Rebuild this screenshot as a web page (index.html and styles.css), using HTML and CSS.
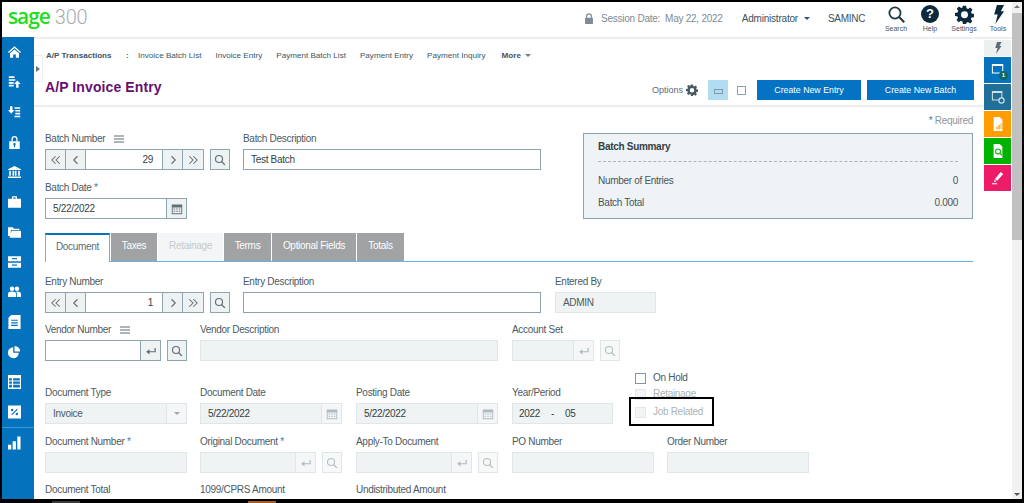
FILE: index.html
```html
<!DOCTYPE html>
<html lang="en">
<head>
<meta charset="utf-8">
<title>A/P Invoice Entry</title>
<link rel="stylesheet" href="styles.css">
</head>
<body>
<svg class="defs" width="0" height="0" aria-hidden="true">
  <symbol id="i-search" viewBox="0 0 16 16"><circle cx="6.7" cy="6.7" r="4.7" fill="none" stroke="currentColor" stroke-width="1.5"/><path d="M10.2 10.2 14.5 14.5" stroke="currentColor" stroke-width="1.8" fill="none"/></symbol>
  <symbol id="i-first" viewBox="0 0 16 16"><path d="M7.5 3 2.5 8l5 5M13 3 8 8l5 5" fill="none" stroke="currentColor" stroke-width="1.4"/></symbol>
  <symbol id="i-prev" viewBox="0 0 16 16"><path d="M10 3 5 8l5 5" fill="none" stroke="currentColor" stroke-width="1.5"/></symbol>
  <symbol id="i-next" viewBox="0 0 16 16"><path d="M6 3l5 5-5 5" fill="none" stroke="currentColor" stroke-width="1.5"/></symbol>
  <symbol id="i-last" viewBox="0 0 16 16"><path d="M3 3l5 5-5 5M8.5 3l5 5-5 5" fill="none" stroke="currentColor" stroke-width="1.4"/></symbol>
  <symbol id="i-enter" viewBox="0 0 16 16"><path d="M13.5 4v5H4" fill="none" stroke="currentColor" stroke-width="1.6"/><path d="M6 5.500v7L1.500 9z" fill="currentColor"/></symbol>
  <symbol id="i-cal" viewBox="0 0 16 16"><path fill="currentColor" d="M1 2h14v13H1zm1.200 4v7.800h11.600V6z"/><path fill="currentColor" d="M3.500 7.200h2v1.600h-2zm3.500 0h2v1.600H7zm3.500 0h2v1.600h-2zm-7 3h2v1.600h-2zm3.500 0h2v1.600H7zm3.500 0h2v1.600h-2z"/></symbol>
  <symbol id="i-gear" viewBox="0 0 24 24"><path fill="currentColor" fill-rule="evenodd" d="M10 1h4l.6 3.200 2 .8L19.300 3.200l2.800 2.800-1.800 2.700.8 2 3 .6v4l-3.200.6-.8 2 1.800 2.700-2.800 2.800-2.700-1.800-2 .8L14 24h-4l-.6-3.200-2-.8-2.700 1.800-2.800-2.800 1.800-2.700-.8-2L0 14v-4l3.200-.6.800-2L2.200 4.700 5 1.900l2.700 1.800 1.700-.7zM12 8a4.400 4.400 0 1 0 0 8.800A4.400 4.400 0 0 0 12 8z"/></symbol>
  <symbol id="i-bolt" viewBox="0 0 16 24"><path fill="currentColor" d="M6 0h9l-4 8h4L4 24l3-12H2.500z"/></symbol>
  <symbol id="i-menu" viewBox="0 0 10 8"><path d="M0 1h10M0 4h10M0 7h10" stroke="currentColor" stroke-width="1" fill="none"/></symbol>
</svg>

<div class="frame">
  <div class="app">
    <header class="topbar">
      <div class="logo"><span class="logo-sage">sage</span><span class="logo-num">300</span></div>
      <div class="session">
        <svg class="lock" viewBox="0 0 12 14"><path fill="#7d8c94" d="M1 6h10v8H1z"/><path fill="none" stroke="#7d8c94" stroke-width="1.6" d="M3 6V4a3 3 0 0 1 6 0v2"/></svg>
        <span class="session-label">Session Date:</span>
        <span class="session-date">May 22, 2022</span>
      </div>
      <div class="user">Administrator<span class="caret-dark"></span></div>
      <div class="company">SAMINC</div>
      <nav class="tools">
        <div class="tool"><svg class="tool-icon tool-search"><use href="#i-search"/></svg><span>Search</span></div>
        <div class="tool"><span class="help-icon">?</span><span>Help</span></div>
        <div class="tool"><svg class="tool-icon"><use href="#i-gear"/></svg><span>Settings</span></div>
        <div class="tool"><svg class="tool-icon"><use href="#i-bolt"/></svg><span>Tools</span></div>
      </nav>
    </header>

    <div class="body">
      <aside class="sidebar">
        <div class="side-item"><svg viewBox="0 0 16 14"><path d="M8 0 0 7l1 1.200L8 2.200l7 6L16 7zM2.500 8.500 8 3.800l5.500 4.700V14H9.700v-4H6.300v4H2.500z"/></svg></div>
        <div class="side-item"><svg viewBox="0 0 16 16"><path d="M1 1h7v2H1zM1 4.500h8v2H1zM1 8h6v2H1zM1 11.500h6v2H1zM11.500 6l4 4.500h-2.500V15h-3v-4.500H7.500z"/></svg></div>
        <div class="side-item"><svg viewBox="0 0 16 16"><path d="M8 2h7v2H8zM9 5.500h6v2H9zM9 9h6v2H9zM8 12.500h7v2H8zM4 10 0 5.500h2.500V1h3v4.500H8z"/></svg></div>
        <div class="side-item"><svg viewBox="0 0 14 16"><path fill-rule="evenodd" d="M1 7h12v9H1zm6 2a1.500 1.500 0 0 0-.7 2.800V14h1.400v-2.200A1.500 1.500 0 0 0 7 9z"/><path d="M3.500 7V4.500a3.500 3.500 0 0 1 7 0V7H9V4.500a2 2 0 0 0-4 0V7z"/></svg></div>
        <div class="side-item"><svg viewBox="0 0 16 15"><path d="M8 0l8 4v1H0V4zM1.500 6h2v6h-2zM5.500 6h2v6h-2zM8.500 6h2v6h-2zM12.500 6h2v6h-2zM0 13h16v2H0z"/></svg></div>
        <div class="side-item"><svg viewBox="0 0 16 14"><path fill-rule="evenodd" d="M0 3h16v11H0zM5 0h6v3H9.500V1.500h-3V3H5z"/></svg></div>
        <div class="side-item"><svg viewBox="0 0 16 14"><path d="M0 1h6l1.500 2H14v1.500H3.500V12H0z"/><path d="M4.500 5.500H16V14H2z"/></svg></div>
        <div class="side-item"><svg viewBox="0 0 16 14"><path fill-rule="evenodd" d="M0 0h16v6H0zM5 2v1.500h6V2zM0 8h16v6H0zM5 10v1.500h6V10z"/></svg></div>
        <div class="side-item"><svg viewBox="0 0 16 14"><circle cx="5" cy="3" r="2.800"/><circle cx="11" cy="3" r="2.800"/><path d="M0 13v-3.500C0 7.500 2 6.500 5 6.500s5 1 5 3V13zM11 13V9c0-1-.4-1.800-1-2.400.4-.1.700-.1 1-.1 3 0 5 1 5 3V13z"/></svg></div>
        <div class="side-item"><svg viewBox="0 0 13 15"><path fill-rule="evenodd" d="M3 0h10v15H0V3zM3 5v1.200h7V5zM3 7.800V9h7V7.800zM3 10.500v1.200h7v-1.200z"/></svg></div>
        <div class="side-item"><svg viewBox="0 0 15 14"><path d="M6 1.500V8h6.500A6.300 6.300 0 1 1 6 1.500z"/><path d="M7.500 0A6.500 6.500 0 0 1 14 6.500H7.500z"/></svg></div>
        <div class="side-item"><svg viewBox="0 0 14 15"><path fill-rule="evenodd" d="M0 0h14v15H0zm1.200 3.500v2.500h3V3.500zm4.300 0v2.500h7.300V3.500zM1.200 7v2.500h3V7zm4.300 0v2.500h7.300V7zm-4.300 3.500v3h3v-3zm4.300 0v3h7.300v-3z"/></svg></div>
        <div class="side-item"><svg viewBox="0 0 14 14"><path fill-rule="evenodd" d="M0 0h14v14H0zm9.700 3.500L3.500 9.700l.8.800 6.200-6.200zM4.500 3.500a1.300 1.300 0 1 0 0 2.600 1.300 1.300 0 0 0 0-2.600zm5 4.400a1.300 1.300 0 1 0 0 2.600 1.300 1.300 0 0 0 0-2.600z"/></svg></div>
        <div class="side-item side-last"><svg viewBox="0 0 14 14"><path d="M0 9h3.500v5H0zM5 5h3.500v9H5zM10 0h3.500v14H10z"/></svg></div>
      </aside>
      <div class="handle"><span class="handle-arrow"></span></div>

      <main class="content">
        <nav class="crumbs">
          <span class="crumb-title">A/P Transactions</span>
          <span class="crumb-sep">:</span>
          <a>Invoice Batch List</a><a>Invoice Entry</a><a>Payment Batch List</a><a>Payment Entry</a><a>Payment Inquiry</a>
          <span class="crumb-more">More<span class="caret-grey"></span></span>
        </nav>
        <div class="titlebar">
          <h1>A/P Invoice Entry</h1>
          <div class="actions">
            <span class="options">Options</span>
            <svg class="options-gear"><use href="#i-gear"/></svg>
            <span class="view-on"><span class="view-on-mark"></span></span>
            <span class="view-off"></span>
            <button class="primary btn-entry">Create New Entry</button>
            <button class="primary btn-batch">Create New Batch</button>
          </div>
        </div>

        <div class="form">
          <div class="required"><b>*</b> Required</div>
          <section class="top">
            <div class="top-left">
              <div class="row">
                <div class="field w-185">
                  <label>Batch Number<svg class="menu"><use href="#i-menu"/></svg></label>
                  <div class="ctl">
                    <div class="pager">
                      <span class="pbtn"><svg><use href="#i-first"/></svg></span><span class="pbtn"><svg><use href="#i-prev"/></svg></span>
                      <span class="pval">29</span>
                      <span class="pbtn"><svg><use href="#i-next"/></svg></span><span class="pbtn"><svg><use href="#i-last"/></svg></span>
                    </div>
                    <span class="sbtn"><svg><use href="#i-search"/></svg></span>
                  </div>
                </div>
                <div class="field w-298 ml-13">
                  <label>Batch Description</label>
                  <div class="input">Test Batch</div>
                </div>
              </div>
              <div class="row mt-12">
                <div class="field w-142">
                  <label>Batch Date <b class="req">*</b></label>
                  <div class="ctl ctl-tight"><div class="input grow">5/22/2022</div><span class="addon"><svg><use href="#i-cal"/></svg></span></div>
                </div>
              </div>
            </div>
            <aside class="summary">
              <h2>Batch Summary</h2>
              <div class="sum-row"><span>Number of Entries</span><span>0</span></div>
              <div class="sum-row"><span>Batch Total</span><span>0.000</span></div>
            </aside>
          </section>

          <div class="tabs">
            <span class="tab active">Document</span>
            <span class="tab t-taxes">Taxes</span>
            <span class="tab off t-ret">Retainage</span>
            <span class="tab t-terms">Terms</span>
            <span class="tab t-opt">Optional Fields</span>
            <span class="tab t-tot">Totals</span>
          </div>

          <div class="row mt-14">
            <div class="field w-185">
              <label>Entry Number</label>
              <div class="ctl">
                <div class="pager">
                  <span class="pbtn"><svg><use href="#i-first"/></svg></span><span class="pbtn"><svg><use href="#i-prev"/></svg></span>
                  <span class="pval">1</span>
                  <span class="pbtn"><svg><use href="#i-next"/></svg></span><span class="pbtn"><svg><use href="#i-last"/></svg></span>
                </div>
                <span class="sbtn"><svg><use href="#i-search"/></svg></span>
              </div>
            </div>
            <div class="field w-298 ml-13">
              <label>Entry Description</label>
              <div class="input"></div>
            </div>
            <div class="field w-101 ml-14">
              <label>Entered By</label>
              <div class="input dis strong">ADMIN</div>
            </div>
          </div>

          <div class="row mt-11">
            <div class="field w-142">
              <label>Vendor Number<svg class="menu"><use href="#i-menu"/></svg></label>
              <div class="ctl">
                <div class="ctl-tight grow"><div class="input grow"></div><span class="addon"><svg><use href="#i-enter"/></svg></span></div>
                <span class="sbtn"><svg><use href="#i-search"/></svg></span>
              </div>
            </div>
            <div class="field w-298 ml-13">
              <label>Vendor Description</label>
              <div class="input dis"></div>
            </div>
            <div class="field w-108 ml-14">
              <label>Account Set</label>
              <div class="ctl">
                <div class="ctl-tight grow"><div class="input dis grow"></div><span class="addon dis"><svg><use href="#i-enter"/></svg></span></div>
                <span class="sbtn dis"><svg><use href="#i-search"/></svg></span>
              </div>
            </div>
          </div>

          <div class="row row-end mt-10">
            <div class="field w-142">
              <label>Document Type</label>
              <div class="ctl-tight"><div class="input dis grow strong">Invoice</div><span class="addon dis"><span class="caret-select"></span></span></div>
            </div>
            <div class="field w-142 ml-13">
              <label>Document Date</label>
              <div class="ctl-tight"><div class="input dis grow">5/22/2022</div><span class="addon dis"><svg><use href="#i-cal"/></svg></span></div>
            </div>
            <div class="field w-142 ml-14">
              <label>Posting Date</label>
              <div class="ctl-tight"><div class="input dis grow">5/22/2022</div><span class="addon dis"><svg><use href="#i-cal"/></svg></span></div>
            </div>
            <div class="field w-101 ml-14">
              <label>Year/Period</label>
              <div class="input dis period"><span>2022</span><span>-</span><span>05</span></div>
            </div>
            <div class="checks">
              <div class="check"><span class="box"></span>On Hold</div>
              <div class="check off"><span class="box"></span>Retainage</div>
              <div class="check off"><span class="box"></span>Job Related</div>
              <div class="callout"></div>
            </div>
          </div>

          <div class="row mt-12">
            <div class="field w-142">
              <label>Document Number <b class="req">*</b></label>
              <div class="input dis"></div>
            </div>
            <div class="field w-142 ml-13">
              <label>Original Document <b class="req">*</b></label>
              <div class="ctl">
                <div class="ctl-tight grow"><div class="input dis grow"></div><span class="addon dis"><svg><use href="#i-enter"/></svg></span></div>
                <span class="sbtn dis"><svg><use href="#i-search"/></svg></span>
              </div>
            </div>
            <div class="field w-142 ml-14">
              <label>Apply-To Document</label>
              <div class="ctl">
                <div class="ctl-tight grow"><div class="input dis grow"></div><span class="addon dis"><svg><use href="#i-enter"/></svg></span></div>
                <span class="sbtn dis"><svg><use href="#i-search"/></svg></span>
              </div>
            </div>
            <div class="field w-142 ml-14">
              <label>PO Number</label>
              <div class="input dis"></div>
            </div>
            <div class="field w-142 ml-13">
              <label>Order Number</label>
              <div class="input dis"></div>
            </div>
          </div>

          <div class="row mt-11">
            <label class="lbl w-142">Document Total</label>
            <label class="lbl w-142 ml-13">1099/CPRS Amount</label>
            <label class="lbl w-142 ml-14">Undistributed Amount</label>
          </div>
        </div>
      </main>

      <aside class="dock">
        <div class="dock-item d-bolt"><svg class="dock-bolt"><use href="#i-bolt"/></svg></div>
        <div class="dock-item d-blue"><svg viewBox="0 0 16 16"><path fill="#fff" fill-rule="evenodd" d="M1 1h13v11H1zm1.200 2.500v7.300h10.600V3.500z"/></svg><span class="dock-badge">1</span></div>
        <div class="dock-item d-teal"><svg viewBox="0 0 16 16"><path fill="#cfe0e8" fill-rule="evenodd" d="M1 1h12v11H1zm1.200 2.500v7.300h9.600V3.500z"/><circle cx="12" cy="12" r="3" fill="#1f6f98" stroke="#cfe0e8" stroke-width="1.300"/></svg></div>
        <div class="dock-item d-orange"><svg viewBox="0 0 16 16"><path fill="#fff" d="M3 0h7l3 3v13H3z"/><path fill="#ff9c00" d="M6 11h1.500v3H6zM8.500 9H10v5H8.500zM11 7h1v7h-1z"/></svg></div>
        <div class="dock-item d-green"><svg viewBox="0 0 16 16"><path fill="#fff" d="M3 0h7l3 3v13H3z"/><circle cx="8" cy="8.500" r="2.800" fill="none" stroke="#00b300" stroke-width="1.200"/><path d="M10 10.500l2.500 2.500" stroke="#00b300" stroke-width="1.200"/></svg></div>
        <div class="dock-item d-pink"><svg viewBox="0 0 16 16"><path fill="#fff" d="M11 1l3 2.500L7 11l-2.500-2zM4 10l2 1.500-2.500 1.500zM1 14h6v1H1z"/></svg></div>
      </aside>
    </div>
  </div>
  <div class="scrollbar">
    <span class="arrow-up"></span>
    <div class="thumb"></div>
    <span class="arrow-down"></span>
  </div>
</div>
<div class="taskstrip"><span class="task-a"></span><span class="task-b"></span></div>
</body>
</html>
```
FILE: styles.css
```css
* { box-sizing: border-box; }
html, body { margin: 0; padding: 0; }
body {
  width: 1024px; height: 503px; overflow: hidden; background: #000;
  font-family: "Liberation Sans", Arial, sans-serif; font-size: 10px; letter-spacing: -.3px; color: #444f55;
  position: relative;
}
.defs { position: absolute; }
.frame {
  width: 1024px; height: 499px; display: flex; background: #fff;
  border-top: 2px solid #000; border-left: 2px solid #000; border-right: 2px solid #000;
}
.app { flex: 1; min-width: 0; display: flex; flex-direction: column; }

/* top bar */
.topbar { height: 37px; flex: none; display: flex; align-items: center; border-bottom: 2px solid #eceeef; letter-spacing: 0; }
.logo { display: flex; align-items: baseline; margin-left: 6px; width: 90px; margin-top: -7px; }
.logo-sage { font-family: "Open Sans", sans-serif; font-weight: 600; font-size: 21px; letter-spacing: -1.100px; color: #22dd22; }
.logo-num { font-family: Roboto, sans-serif; font-weight: 300; font-size: 20px; color: #a9adaf; margin-left: 5px; letter-spacing: -.2px; }
.session { margin-left: auto; margin-bottom: 2px; display: flex; align-items: center; color: #7d8c94; font-size: 10px; letter-spacing: -.25px; }
.lock { width: 10px; height: 11px; margin-right: 7px; }
.session-date { margin-left: 5px; }
.user { margin-left: 19px; margin-bottom: 2px; color: #3c5260; font-size: 10px; letter-spacing: -.2px; display: flex; align-items: center; }
.caret-dark { width: 0; height: 0; border: 3px solid transparent; border-top: 3.500px solid #3c5260; border-bottom: 0; margin-left: 6px; }
.company { margin-left: 18px; margin-bottom: 2px; color: #3c5260; font-size: 10px; letter-spacing: -.3px; width: 37px; }
.tools { display: flex; margin-left: 14px; margin-right: -3px; }
.tool { width: 34px; display: flex; flex-direction: column; align-items: center; font-size: 7px; color: #45565f; height: 33px; }
.tool-icon { width: 19px; height: 19px; margin-top: 2px; margin-bottom: 1px; color: #0c2a3b; flex: none; }
.tool-search { color: #1f3947; }
.help-icon { width: 18px; height: 18px; border-radius: 50%; margin: 2px 0 2px; background: #0c2a3b; color: #fff; font-weight: bold; font-size: 13px; line-height: 18px; text-align: center; flex: none; }

/* frame body */
.body { flex: 1; min-height: 0; display: flex; position: relative; }
.sidebar { width: 32px; flex: none; background: #0572bd; display: flex; flex-direction: column; margin-top: -2px; }
.side-item { height: 30px; flex: none; display: flex; align-items: center; padding-left: 6px; }
.side-item svg { width: 13px; height: 14px; fill: #fff; }
.side-last { border-top: 1px solid #3f95cf; }
.handle { position: absolute; left: 32px; top: 16px; width: 9px; height: 27px; background: #fff; border: 1px solid #eef0f1; border-left: 0; display: flex; align-items: center; justify-content: center; }
.handle-arrow { width: 0; height: 0; border: 3px solid transparent; border-left: 4px solid #5f7480; border-right: 0; }

/* content */
.content { flex: 1; min-width: 0; display: flex; flex-direction: column; overflow: hidden; }
.crumbs { height: 32px; flex: none; display: flex; align-items: center; padding-left: 12px; font-size: 8.100px; letter-spacing: 0; color: #3d5663; }
.crumbs a { margin-right: 14px; white-space: nowrap; }
.crumb-title { font-weight: bold; width: 80px; white-space: nowrap; }
.crumb-sep { font-weight: bold; width: 12px; }
.crumb-more { font-weight: bold; margin-left: 2px; display: flex; align-items: center; }
.caret-grey { width: 0; height: 0; border: 3px solid transparent; border-top: 3.500px solid #6d7f89; border-bottom: 0; margin-left: 4px; }
.titlebar { height: 36px; flex: none; display: flex; align-items: flex-start; border-bottom: 2px solid #eceeef; padding-left: 11px; letter-spacing: 0; }
h1 { margin: 8px 0 0; font-size: 14px; font-weight: bold; color: #660f70; line-height: 17px; letter-spacing: .1px; }
.actions { margin-left: auto; display: flex; align-items: center; height: 20px; margin-top: 9px; margin-right: 10px; }
.options { font-size: 9px; color: #5a6b75; }
.options-gear { width: 12px; height: 12px; color: #4a5a63; margin-left: 3px; margin-right: 10px; }
.view-on { width: 20px; height: 20px; background: #b2dcf2; display: flex; align-items: flex-end; justify-content: center; padding-bottom: 6px; }
.view-on-mark { width: 9px; height: 5px; border: 1px solid #7f99a8; display: block; }
.view-off { width: 9px; height: 9px; border: 1px solid #8ca1ad; margin: 0 11px 0 9px; }
.primary { height: 20px; border: 0; padding: 0; background: #0573c4; color: #fff; font: 8.800px "Liberation Sans", Arial, sans-serif; }
.btn-entry { width: 104px; margin-right: 6px; }
.btn-batch { width: 107px; }

/* form */
.form { padding: 0 11px; flex: 1; }
.required { height: 20px; padding-top: 8px; line-height: 12px; text-align: right; color: #8b979e; }
.required b, .req { color: #3a79ad; font-weight: normal; }
.top { display: flex; height: 106px; padding-top: 6px; justify-content: space-between; }
.row { display: flex; }
.row-end { align-items: flex-end; }
.mt-10 { margin-top: 10px; }
.mt-11 { margin-top: 11px; }
.mt-12 { margin-top: 12px; }
.mt-14 { margin-top: 14px; }
.ml-13 { margin-left: 13px; }
.ml-14 { margin-left: 14px; }
.w-101 { width: 101px; }
.w-108 { width: 108px; }
.w-142 { width: 142px; }
.w-185 { width: 185px; }
.w-298 { width: 298px; }
.field { display: flex; flex-direction: column; flex: none; }
.field label, .lbl { height: 12px; line-height: 12px; margin-bottom: 4px; color: #4b5a62; display: flex; align-items: center; white-space: pre; }
.lbl { margin-bottom: 0; display: block; flex: none; }
.menu { width: 10px; height: 8px; margin-left: 9px; color: #5c6c75; }
.ctl { display: flex; justify-content: space-between; height: 21px; }
.ctl-tight { display: flex; height: 21px; }
.grow { flex: 1; min-width: 0; }
.input { height: 21px; border: 1px solid #8fa6b0; background: #fff; padding: 0 7px; line-height: 19px; color: #333f45; white-space: nowrap; }
.input.dis { background: #f0f3f4; border-color: #dfe6e8; }
.strong { color: #4b5a62; }
.period { display: flex; gap: 11px; padding-left: 6px; }
.pager { display: flex; width: 159px; height: 21px; border: 1px solid #8fa6b0; }
.pbtn { width: 20px; flex: none; background: #eff2f3; border-right: 1px solid #8fa6b0; display: flex; align-items: center; justify-content: center; color: #5f6f78; }
.pbtn svg, .sbtn svg, .addon svg { width: 12px; height: 12px; }
.pval { flex: 1; text-align: right; padding-right: 9px; line-height: 19px; color: #333f45; border-right: 1px solid #8fa6b0; }
.pbtn:last-child { border-right: 0; }
.sbtn { width: 20px; flex: none; height: 21px; border: 1px solid #8fa6b0; background: #eff2f3; color: #5f6f78; display: flex; align-items: center; justify-content: center; }
.sbtn.dis { background: #f7f9f9; border-color: #dfe6e8; color: #b6c0c5; }
.addon { width: 20px; flex: none; height: 21px; border: 1px solid #8fa6b0; border-left: 0; background: #eff2f3; color: #5f6f78; display: flex; align-items: center; justify-content: center; }
.addon.dis { border-color: #dfe6e8; background: #f4f6f7; color: #b0bbc1; }
.caret-select { width: 0; height: 0; border: 3px solid transparent; border-top: 3.500px solid #9aa7ae; border-bottom: 0; }
.ctl .sbtn { margin-left: 6px; }

/* summary */
.summary { width: 390px; height: 86px; margin-left: auto; border: 1px solid #90a4ae; background: #f0f3f5; padding: 0 14px; }
.summary h2 { margin: 0; height: 28px; font-size: 10px; line-height: 26px; color: #333f45; border-bottom: 1px dashed #aab4ba; font-weight: bold; }
.sum-row { display: flex; justify-content: space-between; height: 22px; line-height: 21px; color: #47555d; }
.summary h2 + .sum-row { margin-top: 8px; }

/* tabs */
.tabs { display: flex; height: 29px; border-bottom: 1px solid #66b2e3; gap: 1px; }
.tab { height: 28px; line-height: 26px; background: #a0a2a3; color: #fff; text-align: center; flex: none; }
.tab.active { width: 65px; background: #fff; color: #5d6b73; border-top: 2px solid #0573bd; border-left: 1px solid #66b2e3; border-right: 1px solid #66b2e3; height: 29px; line-height: 23px; }
.tab.off { background: #f3f5f6; color: #c4cacd; }
.t-taxes { width: 46px; }
.t-ret { width: 65px; }
.t-terms { width: 47px; }
.t-opt { width: 84px; }
.t-tot { width: 47px; }

/* checks */
.checks { position: relative; margin: 1px 0 0 22px; align-self: flex-start; display: flex; flex-direction: column; width: 120px; }
.check { display: flex; align-items: center; height: 12px; color: #4b5a62; margin-bottom: 4px; line-height: 12px; }
.check:nth-child(2), .check:nth-child(3) { margin-bottom: 6px; }
.check.off { color: #aab4b9; }
.box { width: 11px; height: 11px; border: 1px solid #7f98a3; margin-right: 7px; background: #fff; flex: none; }
.check.off .box { border-color: #e3e8ea; background: #f2f4f5; }
.callout { position: absolute; left: -6px; top: 25px; width: 85px; height: 29px; border: 2px solid #000; }

/* dock */
.dock { width: 27px; flex: none; margin-right: 1px; padding-top: 1px; display: flex; flex-direction: column; gap: 1px; }
.dock-item { height: 26px; flex: none; display: flex; align-items: center; justify-content: center; position: relative; }
.dock-item svg { width: 14px; height: 14px; }
.d-bolt { height: 16px; background: #edf0f1; color: #5d6c74; }
.d-bolt .dock-bolt { width: 8px; height: 12px; }
.d-blue { background: #0573bd; }
.d-teal { background: #1f6f98; }
.d-orange { background: #ff9c00; }
.d-green { background: #00b300; }
.d-pink { background: #ee1c68; }
.dock-badge { position: absolute; right: 3px; bottom: 3px; width: 9px; height: 9px; border-radius: 50%; background: #0d6a63; color: #fff; font-size: 6px; line-height: 9px; text-align: center; font-weight: bold; letter-spacing: 0; }

/* scrollbar */
.scrollbar { width: 10px; flex: none; background: #f1f1f1; display: flex; flex-direction: column; align-items: center; }
.arrow-up { width: 0; height: 0; border: 3px solid transparent; border-bottom: 3px solid #777; border-top: 0; margin-top: 3px; }
.thumb { width: 100%; height: 227px; background: #c1c1c1; margin-top: 5px; }
.arrow-down { margin-top: auto; margin-bottom: 3px; width: 0; height: 0; border: 3px solid transparent; border-top: 3px solid #555; border-bottom: 0; }

/* desktop strip below the window */
.taskstrip { height: 4px; display: flex; align-items: flex-end; background: #000; }
.task-a { width: 28px; height: 2px; background: #3a3a3a; margin-left: 52px; }
.task-b { width: 28px; height: 2px; background: #a85a1c; margin-left: 168px; }
```
